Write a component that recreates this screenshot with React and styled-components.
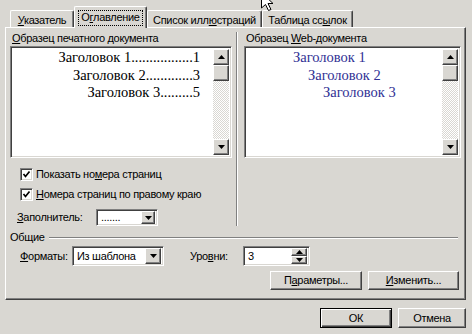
import React from 'react'
import styled, { createGlobalStyle, css } from 'styled-components'

const bg = '#d9d7d2'
const shade = '#808080'
const dark = '#404040'

const GlobalStyle = createGlobalStyle`
    html, body { margin: 0; padding: 0; background: ${bg}; }
    * { box-sizing: border-box; }
`

const raised = css`
    border: 1px solid;
    border-color: #fff ${dark} ${dark} #fff;
    box-shadow: inset -1px -1px ${shade};
    background: ${bg};
`

const sunken = css`
    border: 1px solid;
    border-color: ${shade} #fff #fff ${shade};
    box-shadow: inset 1px 1px ${dark}, inset -1px -1px ${bg};
    background: #fff;
`

const Dialog = styled.div`
    position: relative;
    width: 472px;
    height: 334px;
    overflow: hidden;
    background: ${bg};
    font-family: "Liberation Sans", Arial, sans-serif;
    font-size: 11px;
    letter-spacing: -0.3px;
    line-height: 13px;
    color: #000;
    display: flex;
    flex-direction: column;
`

const TabStrip = styled.div`
    display: flex;
    align-items: flex-end;
    height: 27px;
    padding-left: 10px;
`

const Tab = styled.div`
    position: relative;
    width: ${p => p.$w}px;
    height: 17px;
    padding-top: 3px;
    text-align: center;
    white-space: nowrap;
    background: ${bg};
    border-top: 1px solid #fff;
    border-left: 1px solid #fff;
    border-right: 1px solid ${dark};
    box-shadow: inset -1px 0 ${shade};
    border-top-left-radius: 2px;
    border-top-right-radius: 2px;
    ${p => p.$active && css`
        height: 22px;
        margin-bottom: -1px;
        padding-top: 4px;
        z-index: 2;
    `}
`

const Focus = styled.span`
    display: inline-block;
    padding: 0 2px 1px;
    outline: 1px dotted #000;
`

const Panel = styled.div`
    margin-left: 5px;
    width: 461px;
    height: 273px;
    border: 1px solid;
    border-color: #fff ${dark} ${dark} #fff;
    box-shadow: inset -1px -1px ${shade};
    display: flex;
    flex-direction: column;
`

const TopGrid = styled.div`
    display: grid;
    grid-template-columns: 222px auto 217px;
    padding: 4px 4px 0 4px;
`

const Column = styled.div`
    display: flex;
    flex-direction: column;
    min-width: 0;
`

const Separator = styled.div`
    width: 2px;
    margin: 0 5px 0 4px;
    border-left: 1px solid ${shade};
    border-right: 1px solid #fff;
`

const Caption = styled.div`
    height: 13px;
    padding-left: 2px;
    white-space: nowrap;
`

const Preview = styled.div`
    ${sunken}
    margin-top: 1px;
    height: 112px;
    display: flex;
    padding: 2px;
`

const PreviewBody = styled.div`
    flex: 1;
    min-width: 0;
    font-family: "Liberation Serif", "Times New Roman", serif;
    font-size: 14.5px;
    letter-spacing: 0;
    line-height: 17.5px;
    padding-right: 13px;
    color: ${p => p.$web ? '#303094' : '#000'};
`

const TocLine = styled.div`
    white-space: nowrap;
    text-align: right;
`

const WebLine = styled.div`
    white-space: nowrap;
    padding-left: ${p => p.$indent}px;
`

const ScrollBar = styled.div`
    width: 16px;
    flex-shrink: 0;
    display: flex;
    flex-direction: column;
`

const ArrowBtn = styled.div`
    ${raised}
    width: ${p => p.$w || 16}px;
    height: ${p => p.$h || 16}px;
    display: flex;
    align-items: center;
    justify-content: center;
    flex-shrink: 0;
`

const Thumb = styled.div`
    ${raised}
    height: 16px;
`

const Track = styled.div`
    flex: 1;
    background-color: ${bg};
    background-image: repeating-conic-gradient(#fff 0 25%, ${bg} 0 50%);
    background-size: 2px 2px;
`

const CheckRow = styled.div`
    display: flex;
    align-items: center;
    gap: 3px;
    height: 13px;
    padding-left: 10px;
    margin-top: ${p => p.$mt}px;
    white-space: nowrap;
`

const CheckBox = styled.div`
    ${sunken}
    width: 13px;
    height: 13px;
    display: flex;
    align-items: center;
    justify-content: center;
`

const FieldRow = styled.div`
    display: flex;
    align-items: center;
    margin-top: ${p => p.$mt}px;
    padding-left: ${p => p.$pl}px;
    white-space: nowrap;
`

const FieldLabel = styled.div`
    width: ${p => p.$w}px;
    margin-left: ${p => p.$ml || 0}px;
`

const Combo = styled.div`
    ${sunken}
    width: ${p => p.$w}px;
    height: ${p => p.$h}px;
    display: flex;
    align-items: center;
    justify-content: space-between;
    padding: 2px;
`

const ComboText = styled.span`
    padding-left: 2px;
`

const Spin = styled.div`
    display: flex;
    flex-direction: column;
`

const GroupHeader = styled.div`
    display: flex;
    align-items: center;
    margin-top: 5px;
    padding-left: 4px;
    height: 13px;
`

const GroupLine = styled.div`
    flex: 1;
    margin: 0 7px 0 4px;
    border-top: 1px solid ${shade};
    border-bottom: 1px solid #fff;
`

const ButtonRow = styled.div`
    display: flex;
    justify-content: flex-end;
    gap: 6px;
    margin-top: ${p => p.$mt || 0}px;
    padding: ${p => p.$pad || 0};
`

const Button = styled.div`
    ${raised}
    width: ${p => p.$w}px;
    height: ${p => p.$h || 19}px;
    display: flex;
    align-items: center;
    justify-content: center;
    white-space: nowrap;
    ${p => p.$default && css`
        border-color: #000;
        box-shadow: inset 1px 1px #fff, inset -1px -1px ${dark}, inset -2px -2px ${shade};
    `}
`

const Cursor = styled.svg`
    position: absolute;
    left: 261px;
    top: -8px;
`

const Up = () => (
    <svg width="7" height="4" viewBox="0 0 7 4"><polygon points="3.5,0 7,4 0,4" fill="#000" /></svg>
)
const Down = () => (
    <svg width="7" height="4" viewBox="0 0 7 4"><polygon points="0,0 7,0 3.5,4" fill="#000" /></svg>
)
const Tick = () => (
    <svg width="9" height="9" viewBox="0 0 9 9"><path d="M1.5 4 L3.5 6.5 L7.5 1.5" stroke="#000" strokeWidth="1.7" fill="none" /></svg>
)

const Scroll = () => (
    <ScrollBar>
        <ArrowBtn><Up /></ArrowBtn>
        <Thumb />
        <Track />
        <ArrowBtn><Down /></ArrowBtn>
    </ScrollBar>
)

const headings = [
    { n: 1, page: 1, dots: 17, indent: 46 },
    { n: 2, page: 3, dots: 13, indent: 61 },
    { n: 3, page: 5, dots: 9, indent: 76 },
]

export default function App() {
    return (
        <Dialog>
            <GlobalStyle />
            <TabStrip>
                <Tab $w={64}><u>У</u>казатель</Tab>
                <Tab $w={73} $active><Focus>О<u>г</u>лавление</Focus></Tab>
                <Tab $w={115}>Список илл<u>ю</u>страций</Tab>
                <Tab $w={91}>Таблица сс<u>ы</u>лок</Tab>
            </TabStrip>
            <Panel>
                <TopGrid>
                    <Column>
                        <Caption><u>О</u>бразец печатного документа</Caption>
                        <Preview>
                            <PreviewBody>
                                {headings.map(h => (
                                    <TocLine key={h.n}>
                                        Заголовок {h.n}{'.'.repeat(h.dots)}{h.page}
                                    </TocLine>
                                ))}
                            </PreviewBody>
                            <Scroll />
                        </Preview>
                        <CheckRow $mt={10}>
                            <CheckBox><Tick /></CheckBox>
                            <span>Показать но<u>м</u>ера страниц</span>
                        </CheckRow>
                        <CheckRow $mt={7}>
                            <CheckBox><Tick /></CheckBox>
                            <span><u>Н</u>омера страниц по правому краю</span>
                        </CheckRow>
                        <FieldRow $mt={8} $pl={7}>
                            <FieldLabel $w={79}><u>З</u>аполнитель:</FieldLabel>
                            <Combo $w={62} $h={17}>
                                <ComboText>.......</ComboText>
                                <ArrowBtn $w={14} $h={13}><Down /></ArrowBtn>
                            </Combo>
                        </FieldRow>
                    </Column>
                    <Separator />
                    <Column>
                        <Caption>Образец <u>W</u>eb-документа</Caption>
                        <Preview>
                            <PreviewBody $web>
                                {headings.map(h => (
                                    <WebLine key={h.n} $indent={h.indent}>
                                        Заголовок {h.n}
                                    </WebLine>
                                ))}
                            </PreviewBody>
                            <Scroll />
                        </Preview>
                    </Column>
                </TopGrid>
                <GroupHeader>
                    <span>Общие</span>
                    <GroupLine />
                </GroupHeader>
                <FieldRow $mt={2} $pl={14}>
                    <FieldLabel $w={52}><u>Ф</u>орматы:</FieldLabel>
                    <Combo $w={92} $h={20}>
                        <ComboText>Из шаблона</ComboText>
                        <ArrowBtn $w={16} $h={16}><Down /></ArrowBtn>
                    </Combo>
                    <FieldLabel $w={53} $ml={26}>Уро<u>в</u>ни:</FieldLabel>
                    <Combo $w={67} $h={20}>
                        <ComboText>3</ComboText>
                        <Spin>
                            <ArrowBtn $w={16} $h={8}><Up /></ArrowBtn>
                            <ArrowBtn $w={16} $h={8}><Down /></ArrowBtn>
                        </Spin>
                    </Combo>
                </FieldRow>
                <ButtonRow $mt={5} $pad="0 6px 0 0">
                    <Button $w={92}>П<u>а</u>раметры...</Button>
                    <Button $w={91}><u>И</u>зменить...</Button>
                </ButtonRow>
            </Panel>
            <ButtonRow $pad="8px 6px 0 0">
                <Button $w={72} $h={20} $default>ОК</Button>
                <Button $w={68} $h={20}>Отмена</Button>
            </ButtonRow>
            <Cursor width="13" height="20" viewBox="0 0 13 20">
                <path d="M0.5 0.5 L0.5 16 L4.5 12.5 L7.5 18.5 L10 17.5 L7 11.5 L12 11.5 Z" fill="#fff" stroke="#000" strokeWidth="1" />
            </Cursor>
        </Dialog>
    )
}
